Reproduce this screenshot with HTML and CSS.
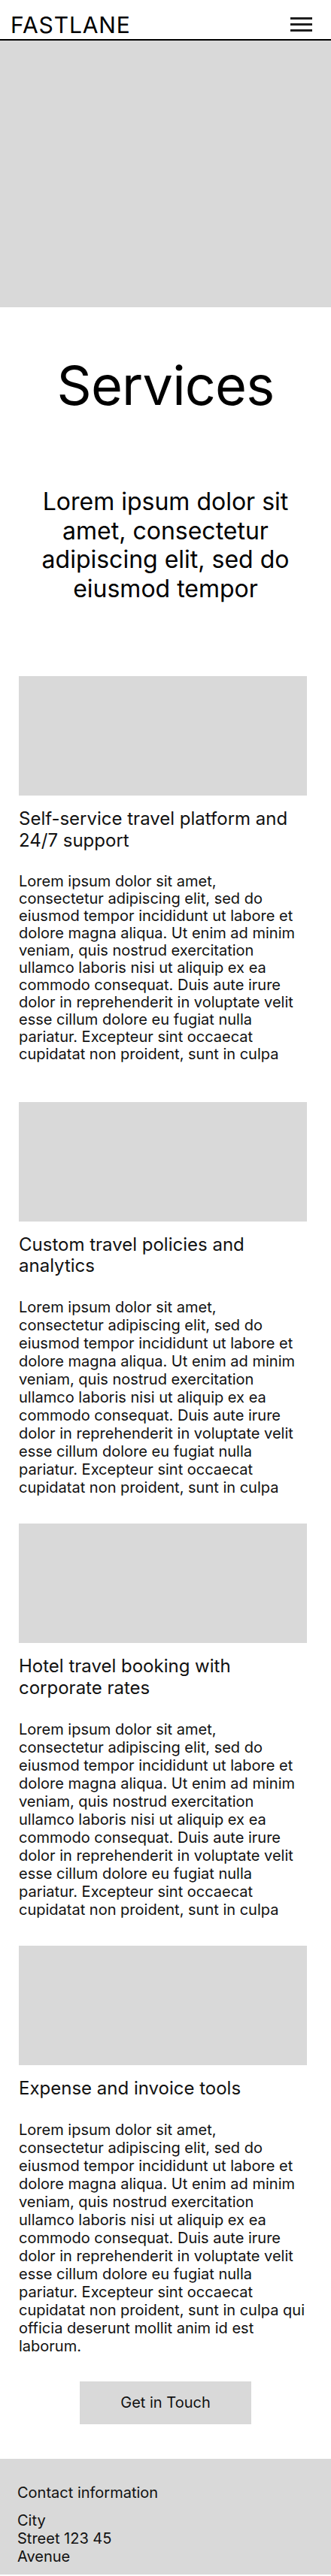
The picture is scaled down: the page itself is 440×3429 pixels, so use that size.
FILE: index.html
```html
<!DOCTYPE html>
<html lang="en">
<head>
<meta charset="utf-8">
<title>Fastlane – Services</title>
<link rel="stylesheet" href="styles.css">
</head>
<body>
<header class="topbar">
  <div class="logo">FASTLANE</div>
  <button class="menu" aria-label="Menu">
    <svg width="29" height="19" viewBox="0 0 29 19"><rect x="0" y="0" width="29" height="3" fill="#1e1e1e"/><rect x="0" y="8" width="29" height="3" fill="#1e1e1e"/><rect x="0" y="16" width="29" height="3" fill="#1e1e1e"/></svg>
  </button>
</header>

<div class="hero"></div>

<h1 class="page-title">Services</h1>
<p class="lead">Lorem ipsum dolor sit amet, consectetur adipiscing elit, sed do eiusmod tempor</p>

<section class="services">
  <article class="card card-first">
    <div class="card-img"></div>
    <h2 class="card-title">Self-service travel platform and 24/7 support</h2>
    <p class="card-text">Lorem ipsum dolor sit amet, consectetur adipiscing elit, sed do eiusmod tempor incididunt ut labore et dolore magna aliqua. Ut enim ad minim veniam, quis nostrud exercitation ullamco laboris nisi ut aliquip ex ea commodo consequat. Duis aute irure dolor in reprehenderit in voluptate velit esse cillum dolore eu fugiat nulla pariatur. Excepteur sint occaecat cupidatat non proident, sunt in culpa</p>
  </article>
  <article class="card">
    <div class="card-img"></div>
    <h2 class="card-title">Custom travel policies and analytics</h2>
    <p class="card-text">Lorem ipsum dolor sit amet, consectetur adipiscing elit, sed do eiusmod tempor incididunt ut labore et dolore magna aliqua. Ut enim ad minim veniam, quis nostrud exercitation ullamco laboris nisi ut aliquip ex ea commodo consequat. Duis aute irure dolor in reprehenderit in voluptate velit esse cillum dolore eu fugiat nulla pariatur. Excepteur sint occaecat cupidatat non proident, sunt in culpa</p>
  </article>
  <article class="card">
    <div class="card-img"></div>
    <h2 class="card-title">Hotel travel booking with corporate rates</h2>
    <p class="card-text">Lorem ipsum dolor sit amet, consectetur adipiscing elit, sed do eiusmod tempor incididunt ut labore et dolore magna aliqua. Ut enim ad minim veniam, quis nostrud exercitation ullamco laboris nisi ut aliquip ex ea commodo consequat. Duis aute irure dolor in reprehenderit in voluptate velit esse cillum dolore eu fugiat nulla pariatur. Excepteur sint occaecat cupidatat non proident, sunt in culpa</p>
  </article>
  <article class="card">
    <div class="card-img"></div>
    <h2 class="card-title">Expense and invoice tools</h2>
    <p class="card-text">Lorem ipsum dolor sit amet, consectetur adipiscing elit, sed do eiusmod tempor incididunt ut labore et dolore magna aliqua. Ut enim ad minim veniam, quis nostrud exercitation ullamco laboris nisi ut aliquip ex ea commodo consequat. Duis aute irure dolor in reprehenderit in voluptate velit esse cillum dolore eu fugiat nulla pariatur. Excepteur sint occaecat cupidatat non proident, sunt in culpa qui officia deserunt mollit anim id est laborum.</p>
  </article>
</section>

<div class="cta-wrap">
  <a class="cta" href="#">Get in Touch</a>
</div>

<footer class="footer">
  <div class="footer-title">Contact information</div>
  <div class="footer-address">City<br>Street 123 45<br>Avenue</div>
</footer>
</body>
</html>
```

FILE: styles.css
```css
* { box-sizing: border-box; }

html, body {
  margin: 0;
  padding: 0;
  background: #fff;
}

body {
  font-family: Inter, "Noto Sans", sans-serif;
  color: #000;
}

.topbar {
  height: 54px;
  padding: 13px 25px 0 14px;
  border-bottom: 2px solid #000;
  display: flex;
  align-items: center;
  justify-content: space-between;
}

.logo {
  font-size: 30px;
  line-height: 36px;
  font-weight: 400;
  letter-spacing: 0.9px;
  color: #000;
}

.menu {
  display: block;
  padding: 0;
  margin: 0;
  border: 0;
  background: none;
  width: 29px;
  height: 19px;
}

.menu svg { display: block; }

.hero {
  height: 355px;
  background: #d9d9d9;
}

.page-title {
  margin: 61px 0 0;
  font-size: 72px;
  line-height: 86.4px;
  font-weight: 400;
  letter-spacing: -0.8px;
  text-align: center;
}

.lead {
  margin: 93px 0 0;
  padding: 0 40px;
  font-size: 32px;
  line-height: 38.4px;
  text-align: center;
}

.services {
  margin-top: 97px;
  display: flex;
  flex-direction: column;
  gap: 36px;
}

.card {
  padding: 0 32px 0 25px;
  color: #111;
}

.card-img {
  height: 159px;
  background: #d9d9d9;
}

.card-title {
  margin: 17px 0 0;
  font-size: 24px;
  line-height: 28.8px;
  font-weight: 400;
}

.card-text {
  margin: 28px 0 0;
  width: 380.5px;
  font-size: 20px;
  line-height: 24px;
}

.card-first { margin-bottom: 16px; }
.card-first .card-text { line-height: 23px; }

.cta-wrap {
  display: flex;
  justify-content: center;
  margin-top: 35px;
}

.cta {
  width: 228px;
  height: 57px;
  display: flex;
  align-items: center;
  justify-content: center;
  background: #d9d9d9;
  color: #111;
  font-size: 20px;
  text-decoration: none;
}

.footer {
  margin-top: 46px;
  background: #d9d9d9;
  padding: 33px 23px 12px;
  color: #111;
  font-size: 20px;
  line-height: 24px;
}

.footer-address { margin-top: 13px; }
```
